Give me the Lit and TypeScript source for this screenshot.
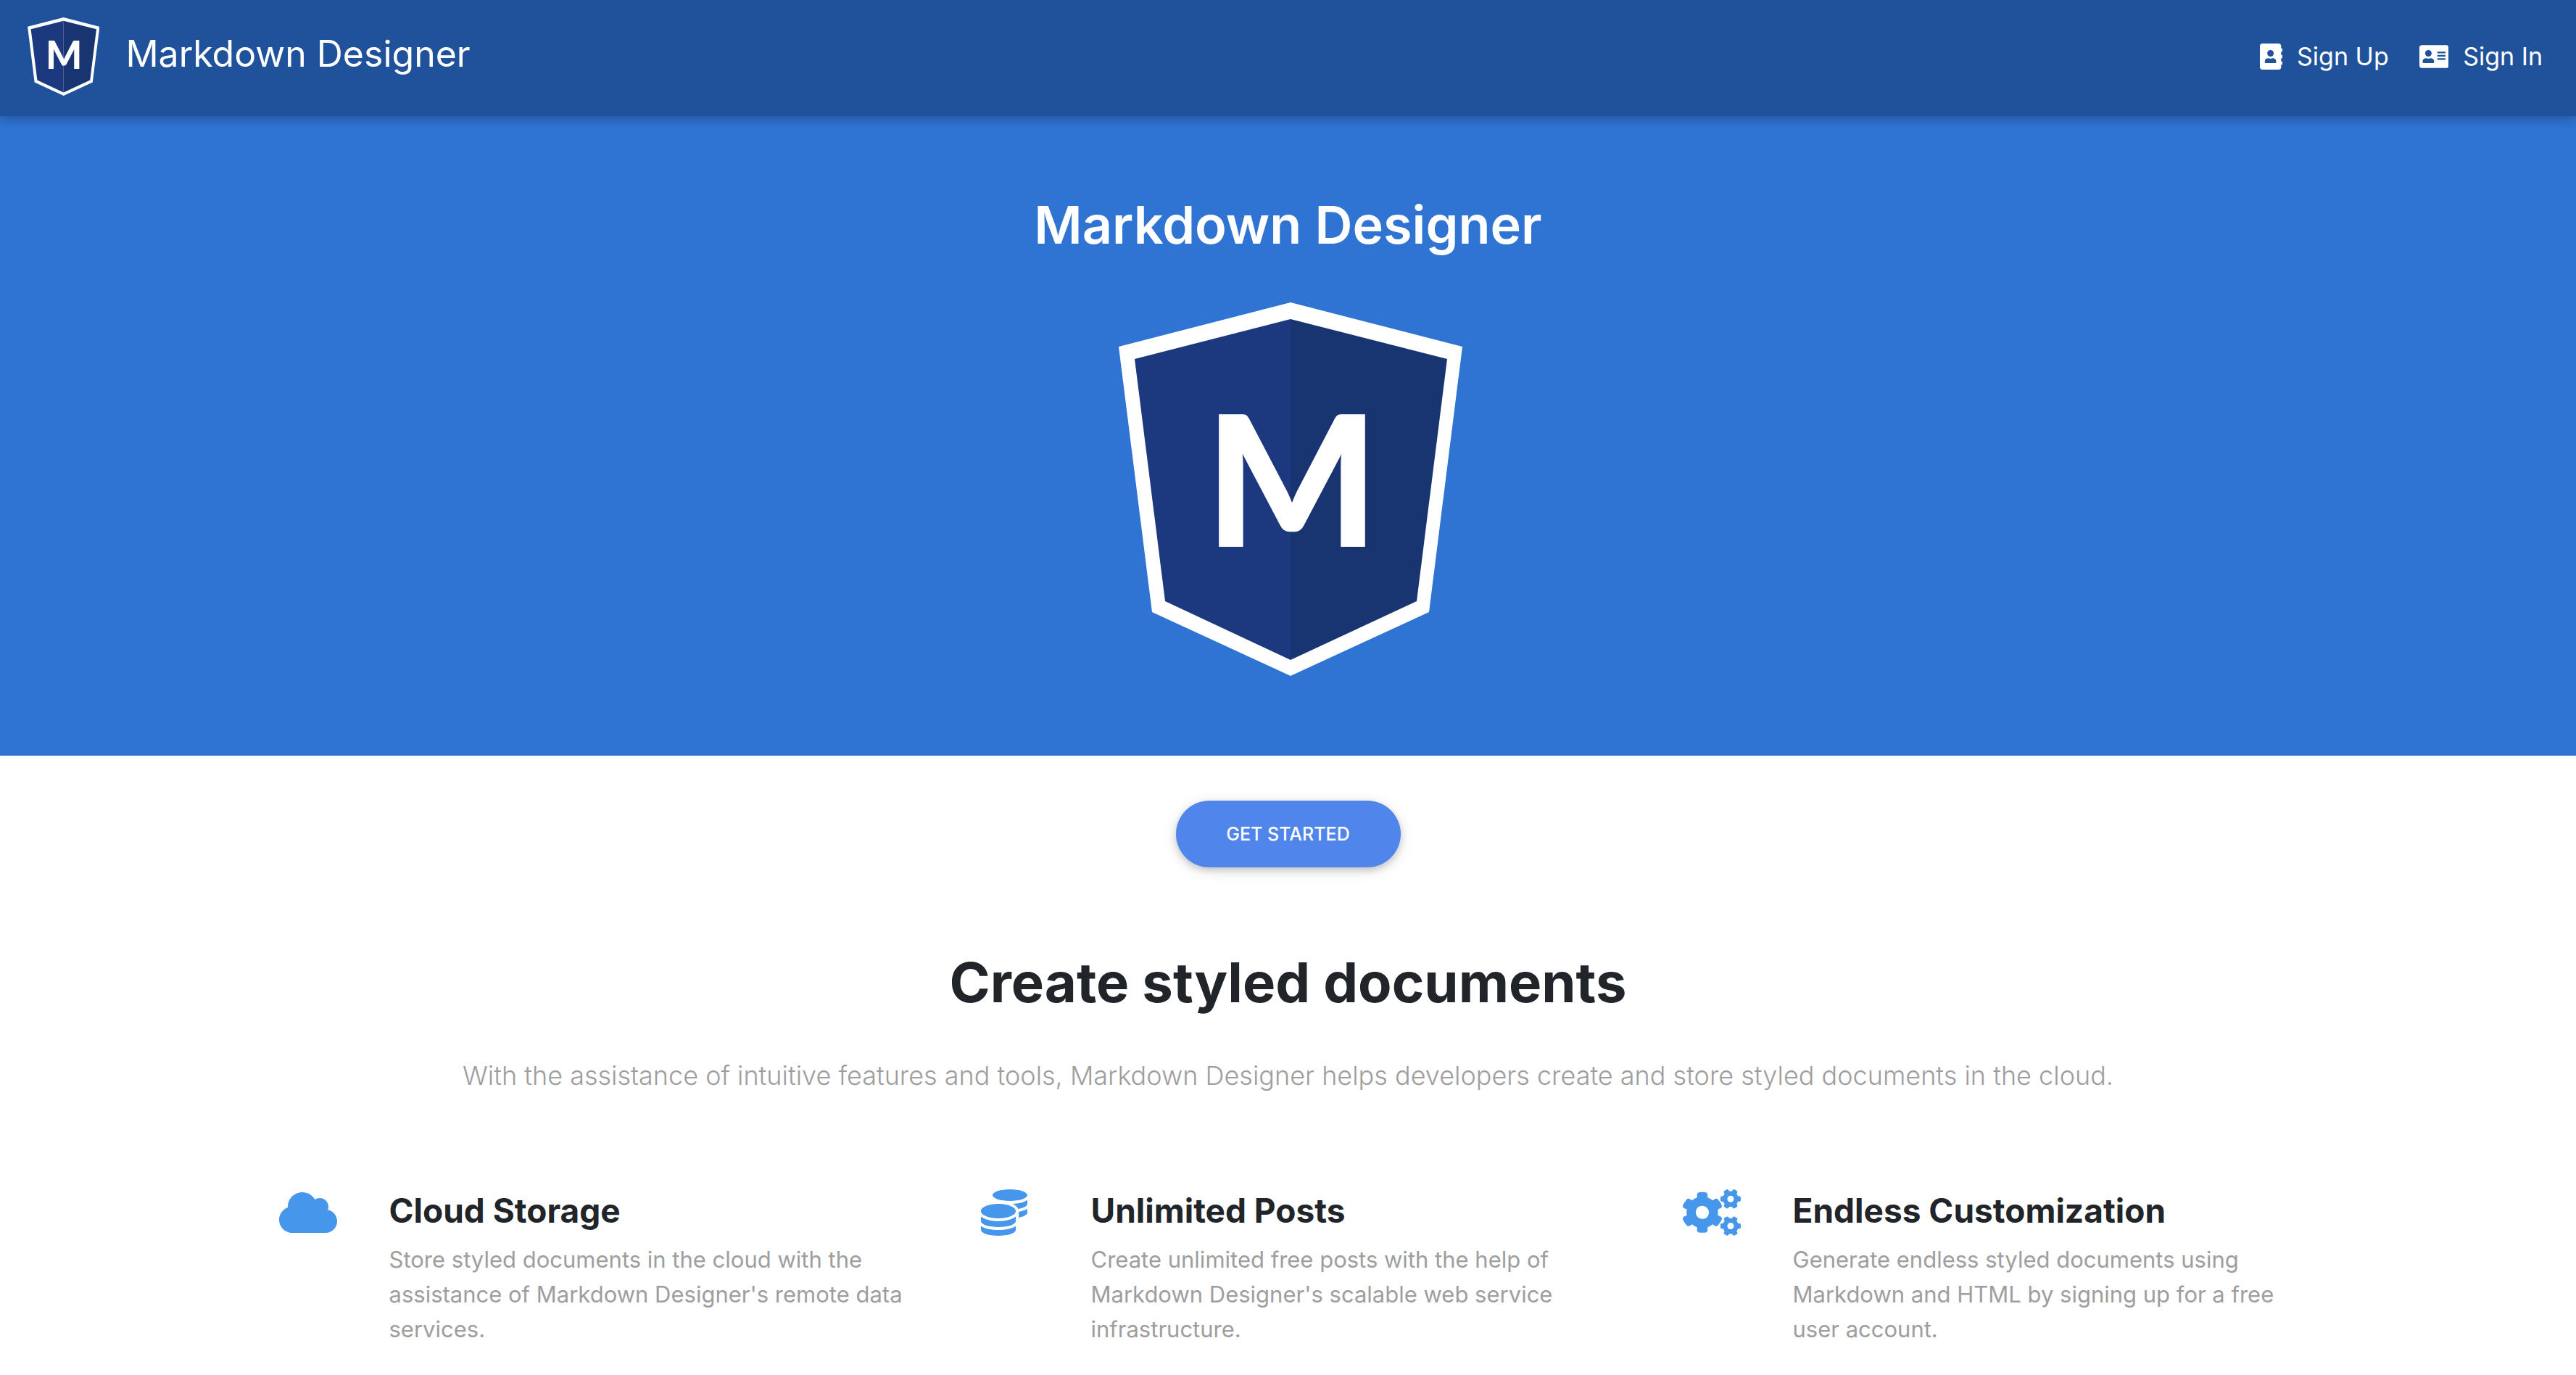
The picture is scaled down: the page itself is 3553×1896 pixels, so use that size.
import { LitElement, html, css, svg } from "lit";
import { customElement, property } from "lit/decorators.js";

interface Icon {
  width: number;
  path: string;
}

interface Feature {
  icon: Icon;
  title: string;
  text: string;
}

const addressBook: Icon = {
  width: 448,
  path: "M436 160c6.600 0 12-5.400 12-12v-40c0-6.600-5.400-12-12-12h-20V48c0-26.500-21.500-48-48-48H48C21.500 0 0 21.500 0 48v416c0 26.500 21.500 48 48 48h320c26.500 0 48-21.500 48-48v-48h20c6.600 0 12-5.400 12-12v-40c0-6.600-5.400-12-12-12h-20v-64h20c6.600 0 12-5.400 12-12v-40c0-6.600-5.400-12-12-12h-20v-64h20zm-228-32c35.300 0 64 28.700 64 64s-28.700 64-64 64-64-28.700-64-64 28.700-64 64-64zm112 236.800c0 10.600-10 19.200-22.400 19.200H118.400C106 384 96 375.400 96 364.800v-19.200c0-31.800 30.100-57.600 67.200-57.600h5c12.300 5.100 25.700 8 39.800 8s27.600-2.900 39.800-8h5c37.100 0 67.200 25.800 67.200 57.600v19.200z",
};

const addressCard: Icon = {
  width: 576,
  path: "M528 32H48C21.500 32 0 53.500 0 80v352c0 26.500 21.500 48 48 48h480c26.500 0 48-21.500 48-48V80c0-26.500-21.500-48-48-48zm-352 96c35.300 0 64 28.700 64 64s-28.700 64-64 64-64-28.700-64-64 28.700-64 64-64zm112 236.800c0 10.600-10 19.200-22.400 19.200H86.400C74 384 64 375.400 64 364.800v-19.200c0-31.800 30.100-57.600 67.200-57.600h5c12.300 5.100 25.700 8 39.800 8s27.600-2.900 39.800-8h5c37.100 0 67.200 25.800 67.200 57.600v19.200zM512 312c0 4.400-3.600 8-8 8H360c-4.400 0-8-3.600-8-8v-16c0-4.400 3.600-8 8-8h144c4.400 0 8 3.600 8 8v16zm0-64c0 4.400-3.600 8-8 8H360c-4.400 0-8-3.600-8-8v-16c0-4.400 3.600-8 8-8h144c4.400 0 8 3.600 8 8v16zm0-64c0 4.400-3.600 8-8 8H360c-4.400 0-8-3.600-8-8v-16c0-4.400 3.600-8 8-8h144c4.400 0 8 3.600 8 8v16z",
};

const cloud: Icon = {
  width: 640,
  path: "M537.6 226.6c4.1-10.7 6.4-22.4 6.4-34.6 0-53-43-96-96-96-19.7 0-38.1 6-53.3 16.2C367 64.2 315.3 32 256 32c-88.4 0-160 71.6-160 160 0 2.7.1 5.4.2 8.1C40.2 219.8 0 273.2 0 336c0 79.5 64.500 144 144 144h368c70.7 0 128-57.3 128-128 0-61.9-44-113.6-102.4-125.4z",
};

const coins: Icon = {
  width: 512,
  path: "M0 405.3V448c0 35.3 86 64 192 64s192-28.7 192-64v-42.7C342.7 434.4 267.2 448 192 448S41.3 434.4 0 405.3zM320 128c106 0 192-28.7 192-64S426 0 320 0 128 28.7 128 64s86 64 192 64zM0 300.4V352c0 35.3 86 64 192 64s192-28.7 192-64v-51.6c-41.3 34-116.9 51.6-192 51.6S41.3 334.4 0 300.4zm416 11c57.3-11.1 96-31.7 96-55.4v-42.7c-23.2 16.4-57.3 27.6-96 34.5v63.6zM192 160C86 160 0 195.8 0 240s86 80 192 80 192-35.8 192-80-86-80-192-80zm219.3 56.3c60-10.8 100.7-32 100.7-56.3v-42.7c-35.5 25.1-96.5 38.6-160.7 41.8 29.5 14.3 51.2 33.5 60 57.2z",
};

const cogs: Icon = {
  width: 640,
  path: "M512.1 191l-8.2 14.3c-3 5.3-9.4 7.5-15.1 5.4-11.8-4.4-22.6-10.7-32.1-18.6-4.6-3.8-5.8-10.5-2.8-15.7l8.2-14.3c-6.9-8-12.3-17.3-15.9-27.4h-16.5c-6 0-11.2-4.3-12.2-10.3-2-12-2.1-24.6 0-37.1 1-6 6.2-10.4 12.2-10.4h16.5c3.6-10.1 9-19.4 15.9-27.4l-8.2-14.3c-3-5.2-1.9-11.9 2.8-15.7 9.5-7.9 20.4-14.2 32.1-18.6 5.7-2.1 12.1.1 15.1 5.4l8.2 14.3c10.5-1.9 21.2-1.9 31.7 0L552 6.3c3-5.3 9.4-7.5 15.1-5.4 11.8 4.4 22.6 10.7 32.1 18.6 4.6 3.8 5.8 10.5 2.8 15.7l-8.2 14.3c6.9 8 12.3 17.3 15.9 27.4h16.5c6 0 11.2 4.3 12.2 10.3 2 12 2.1 24.6 0 37.1-1 6-6.2 10.4-12.2 10.4h-16.5c-3.6 10.1-9 19.4-15.9 27.4l8.2 14.3c3 5.2 1.9 11.9-2.8 15.7-9.5 7.9-20.4 14.2-32.1 18.6-5.7 2.1-12.1-.1-15.1-5.4l-8.2-14.3c-10.4 1.9-21.2 1.9-31.7 0zm-10.5-58.8c38.5 29.6 82.4-14.3 52.8-52.8-38.5-29.7-82.4 14.3-52.8 52.8zM386.3 286.1l33.7 16.8c10.1 5.8 14.5 18.1 10.5 29.1-8.9 24.2-26.4 46.4-42.6 65.8-7.4 8.9-20.2 11.1-30.3 5.3l-29.1-16.8c-16 13.7-34.6 24.6-54.9 31.7v33.6c0 11.6-8.3 21.6-19.7 23.6-24.6 4.2-50.4 4.4-75.9 0-11.5-2-20-11.9-20-23.6V418c-20.3-7.2-38.9-18-54.9-31.7L74 403c-10 5.8-22.9 3.6-30.3-5.3-16.2-19.4-33.3-41.6-42.2-65.7-4-10.9.4-23.2 10.5-29.1l33.3-16.8c-3.9-20.9-3.9-42.4 0-63.4L12 205.8c-10.1-5.8-14.6-18.1-10.5-29 8.9-24.2 26-46.4 42.2-65.8 7.4-8.9 20.2-11.1 30.3-5.3l29.1 16.8c16-13.7 34.6-24.6 54.9-31.7V57.1c0-11.5 8.2-21.5 19.6-23.5 24.6-4.2 50.5-4.4 76-.1 11.5 2 20 11.9 20 23.6v33.6c20.3 7.2 38.9 18 54.9 31.7l29.1-16.8c10-5.8 22.9-3.6 30.3 5.3 16.2 19.4 33.2 41.6 42.1 65.8 4 10.9.1 23.2-10 29.1l-33.7 16.8c3.9 21 3.9 42.5 0 63.5zm-117.6 21.1c59.2-77-28.7-164.9-105.7-105.7-59.2 77 28.7 164.9 105.7 105.7zm243.4 182.7l-8.2 14.3c-3 5.3-9.4 7.5-15.1 5.4-11.8-4.4-22.6-10.7-32.1-18.6-4.6-3.8-5.8-10.5-2.8-15.7l8.2-14.3c-6.9-8-12.3-17.3-15.9-27.4h-16.5c-6 0-11.2-4.3-12.2-10.3-2-12-2.1-24.6 0-37.1 1-6 6.2-10.4 12.2-10.4h16.5c3.6-10.1 9-19.4 15.9-27.4l-8.2-14.3c-3-5.2-1.9-11.9 2.8-15.7 9.5-7.9 20.4-14.2 32.1-18.6 5.7-2.1 12.1.1 15.1 5.4l8.2 14.3c10.5-1.9 21.2-1.9 31.7 0l8.2-14.3c3-5.3 9.4-7.5 15.1-5.4 11.8 4.4 22.6 10.7 32.1 18.6 4.6 3.8 5.8 10.5 2.8 15.7l-8.2 14.3c6.9 8 12.3 17.3 15.9 27.4h16.5c6 0 11.2 4.3 12.2 10.3 2 12 2.1 24.6 0 37.1-1 6-6.2 10.4-12.2 10.4h-16.5c-3.6 10.1-9 19.4-15.9 27.4l8.2 14.3c3 5.2 1.9 11.9-2.8 15.7-9.5 7.9-20.4 14.2-32.1 18.6-5.7 2.1-12.1-.1-15.1-5.4l-8.2-14.3c-10.4 1.9-21.2 1.9-31.7 0zM501.6 431c38.5 29.6 82.4-14.3 52.8-52.8-38.5-29.6-82.4 14.3-52.8 52.8z",
};

const features: Feature[] = [
  {
    icon: cloud,
    title: "Cloud Storage",
    text: "Store styled documents in the cloud with the assistance of Markdown Designer's remote data services.",
  },
  {
    icon: coins,
    title: "Unlimited Posts",
    text: "Create unlimited free posts with the help of Markdown Designer's scalable web service infrastructure.",
  },
  {
    icon: cogs,
    title: "Endless Customization",
    text: "Generate endless styled documents using Markdown and HTML by signing up for a free user account.",
  },
];

const drawIcon = (icon: Icon) => html`
  <svg class="icon" viewBox="0 0 ${icon.width} 512" aria-hidden="true">
    ${svg`<path fill="currentColor" d=${icon.path}></path>`}
  </svg>
`;

@customElement("shield-logo")
export class ShieldLogo extends LitElement {
  static styles = css`
    :host {
      display: block;
    }
    .shield {
      display: block;
      height: 100%;
    }
    .letter {
      font-family: Lato, "DejaVu Sans", sans-serif;
      font-weight: 900;
      font-size: 252px;
    }
  `;

  render() {
    return html`
      <svg class="shield" viewBox="0 0 474 515" role="img" aria-label="Markdown Designer logo">
        <path fill="#fff" d="M237 0L474 61L428 427L237 515L46 427L0 61Z"></path>
        <path fill="#1c387f" d="M237 23L22 78L64 412L237 493Z"></path>
        <path fill="#183572" d="M237 23L453 78L411 412L237 493Z"></path>
        <text class="letter" x="239" y="337" text-anchor="middle" fill="#fff">M</text>
      </svg>
    `;
  }
}

@customElement("feature-item")
export class FeatureItem extends LitElement {
  @property({ attribute: false }) feature!: Feature;

  static styles = css`
    :host {
      display: grid;
      grid-template-columns: 152px 1fr;
      padding: 0 30px 0 60px;
    }
    .icon {
      display: block;
      height: 64px;
      color: #4696ec;
    }
    .title {
      margin: 0 0 15px;
      font-size: 46px;
      line-height: 58px;
      font-weight: 700;
      color: #212529;
    }
    .text {
      margin: 0;
      font-size: 31px;
      line-height: 48px;
      color: #9e9e9e;
    }
  `;

  render() {
    return html`
      ${drawIcon(this.feature.icon)}
      <div>
        <h3 class="title">${this.feature.title}</h3>
        <p class="text">${this.feature.text}</p>
      </div>
    `;
  }
}

@customElement("app-root")
export class AppRoot extends LitElement {
  static styles = css`
    :host {
      display: block;
      font-family: Inter, "Liberation Sans", sans-serif;
      font-weight: 400;
      color: #212529;
      background: #fff;
    }
    .bar {
      position: relative;
      z-index: 1;
      display: flex;
      justify-content: space-between;
      align-items: center;
      padding: 24px 46px 28px 38px;
      background: #1f529a;
      color: #fff;
      box-shadow: 0 4px 10px rgba(0, 0, 0, 0.16), 0 4px 20px rgba(0, 0, 0, 0.12);
    }
    .brand {
      display: flex;
      gap: 36px;
      color: inherit;
      text-decoration: none;
      font-size: 50px;
      line-height: 100px;
    }
    .brand-logo {
      height: 108px;
    }
    .nav {
      display: flex;
      gap: 42px;
    }
    .nav-link {
      display: flex;
      align-items: center;
      gap: 20px;
      color: inherit;
      text-decoration: none;
      font-size: 34px;
      line-height: 48px;
    }
    .nav-link .icon {
      display: block;
      height: 36px;
    }
    .hero {
      display: flex;
      flex-direction: column;
      align-items: center;
      gap: 59px;
      padding: 102px 48px 110px;
      background: #2f74d3;
      color: #fff;
    }
    .hero-title {
      margin: 0;
      font-size: 72px;
      line-height: 96px;
      font-weight: 600;
    }
    .hero-logo {
      height: 515px;
      padding-left: 7px;
    }
    .content {
      display: flex;
      flex-direction: column;
      align-items: center;
      padding: 62px 0 32px;
    }
    .start {
      min-width: 310px;
      height: 92px;
      border: 0;
      border-radius: 46px;
      background: #5085ec;
      color: #fff;
      font: inherit;
      font-size: 25px;
      font-weight: 500;
      text-transform: uppercase;
      box-shadow: 0 4px 10px rgba(0, 0, 0, 0.16), 0 4px 20px rgba(0, 0, 0, 0.12);
    }
    .heading {
      margin: 110px 0 51px;
      font-size: 76px;
      line-height: 96px;
      font-weight: 700;
      text-align: center;
    }
    .lead {
      margin: 0 0 127px;
      font-size: 36px;
      line-height: 60px;
      font-weight: 300;
      color: #9e9e9e;
      text-align: center;
    }
    .features {
      display: grid;
      grid-template-columns: repeat(3, 1fr);
      width: 100%;
      max-width: 2904px;
    }
  `;

  render() {
    return html`
      <header class="bar">
        <a class="brand" href="#home">
          <shield-logo class="brand-logo"></shield-logo>
          <span>Markdown Designer</span>
        </a>
        <nav class="nav">
          <a class="nav-link" href="#sign-up">${drawIcon(addressBook)}<span>Sign Up</span></a>
          <a class="nav-link" href="#sign-in">${drawIcon(addressCard)}<span>Sign In</span></a>
        </nav>
      </header>
      <section class="hero">
        <h1 class="hero-title">Markdown Designer</h1>
        <shield-logo class="hero-logo"></shield-logo>
      </section>
      <main class="content">
        <button class="start" type="button">Get Started</button>
        <h2 class="heading">Create styled documents</h2>
        <p class="lead">
          With the assistance of intuitive features and tools, Markdown Designer helps developers create and store
          styled documents in the cloud.
        </p>
        <div class="features">
          ${features.map((feature) => html`<feature-item .feature=${feature}></feature-item>`)}
        </div>
      </main>
    `;
  }
}
